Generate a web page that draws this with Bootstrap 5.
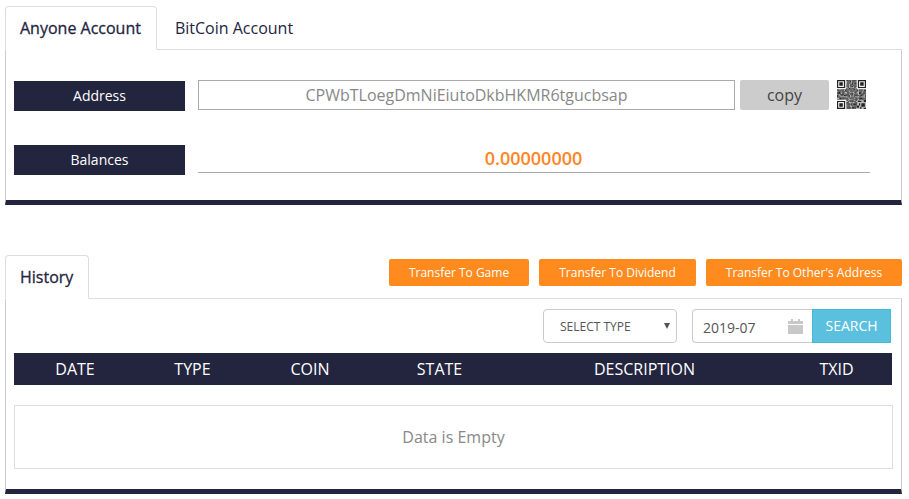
<!DOCTYPE html>
<html lang="en">
<head>
<meta charset="utf-8">
<title>Account</title>
<link rel="stylesheet" href="https://cdn.jsdelivr.net/npm/bootstrap@5.3.0/dist/css/bootstrap.min.css">
<style>
body{font-family:"Open Sans",sans-serif;color:#23253f;background:#fff;margin:0}
.page-wrap{padding:6px 7px 0 5px;width:909px}
.tab-bar{border-bottom:1px solid #ddd;height:44px;--bs-nav-tabs-border-color:#ddd}
.tab-bar .nav-link{font-size:16px;line-height:22px;padding:10px 15px 11px 14px;color:#23253f;height:44px;border-radius:4px 4px 0 0;white-space:nowrap}
.tab-bar .nav-link.active{font-weight:500;-webkit-text-stroke:.3px #23253f;color:#23253f;border-color:#ddd #ddd #fff}
.tab-bar .nav-link:not(.active){padding-left:17px;padding-right:17px}
.panel-box{border-left:1px solid #ccc;border-right:1px solid #ccc;border-bottom:5px solid #23253f}
.panel-top{height:155px;padding:30px 8px 0}
.panel-hist{height:195px;padding:10px 8px 0}
.label-tag{width:171px;height:30px;background:#23253f;color:#fff;font-size:14px;line-height:30px;text-align:center;flex:none}
.label-low{margin-top:1px}
.addr-row{height:30px}
.addr-field{width:537px;height:30px;margin-left:13px;border:1px solid #aaa;border-radius:0;font-size:16px;line-height:28px;color:#888;text-align:center;padding:0;flex:none;background:#fff}
.copy-btn{width:89px;height:30px;margin-left:5px;background:#ccc;border:0;border-radius:2px;font-size:16px;line-height:30px;padding:0;color:#444;flex:none}
.qr-code{display:block;margin-left:8px;flex:none;filter:blur(.35px)}
.bal-row{height:30px;margin-top:35px}
.bal-value{width:672px;height:28px;margin-left:13px;border-bottom:1px solid #aaa;color:#ff8526;font-size:18px;font-weight:600;line-height:27px;text-align:center;flex:none;margin-bottom:2px;padding-right:1px}
.gap-band{height:50px}
.act-row{gap:10px;padding-top:4px}
.act-btn{height:27px;background:#ff8a1e;border:0;border-radius:2px;color:#fff;font-size:12px;line-height:27px;padding:0;text-align:center;flex:none}
.act-a{width:140px}.act-b{width:157px}.act-c{width:196px}
.type-select{width:134px;height:34px;flex:none;border:1px solid #ccc;border-radius:4px;font-size:12px;color:#555;padding:2px 16px 0;line-height:30px;font-family:inherit;box-shadow:none;background-image:url("data:image/svg+xml,%3Csvg xmlns='http://www.w3.org/2000/svg' viewBox='0 0 6 6'%3E%3Cpath fill='%23555' d='M0 0h6L3 6z'/%3E%3C/svg%3E");background-position:right 6px center;background-size:6px 6px}
.date-wrap{width:120px;height:34px;margin-left:15px;border:1px solid #ccc;border-right:0;border-radius:4px 0 0 4px;flex:none}
.date-input{width:94px;height:32px;border:0;outline:0;padding:2px 0 0 10px;font-size:14px;color:#555;background:transparent;font-family:inherit}
.search-btn{width:79px;height:34px;background:#5bc0de;border:1px solid #46b8da;border-radius:0;color:#fff;font-size:14px;line-height:30px;padding:0;flex:none}
.filter-row{height:34px;padding-right:2px}
.hist-table{width:878px;margin:10px 0 0;table-layout:fixed;border-collapse:collapse}
.hist-table th{background:#23253f;color:#fff;font-size:16px;font-weight:400;height:32px;padding:0;text-align:center;border:0;line-height:32px}
.empty-box{width:879px;height:64px;margin-top:20px;border:1px solid #ddd;color:#888;font-size:16px;line-height:62px;text-align:center}
</style>
</head>
<body>
<div class="page-wrap">
  <ul class="nav nav-tabs tab-bar">
    <li class="nav-item"><a class="nav-link active" href="#">Anyone Account</a></li>
    <li class="nav-item"><a class="nav-link" href="#">BitCoin Account</a></li>
  </ul>
  <div class="panel-box panel-top">
    <div class="d-flex align-items-start addr-row">
      <div class="label-tag label-low">Address</div>
      <div class="addr-field">CPWbTLoegDmNiEiutoDkbHKMR6tgucbsap</div>
      <button type="button" class="btn copy-btn">copy</button>
      <svg class="qr-code" width="29" height="29" viewBox="0 0 25 25" aria-label="QR code">
        <defs>
          <path id="qrData" d="M8 0h2v1H8zM11 0h1v2h-1zM13 0h3v1h-3zM9 2h2v1H9zM13 2h1v2h-1zM15 2h2v2h-2zM8 4h2v2H8zM11 4h1v1h-1zM12 5h2v1h-2zM15 5h1v2h-1zM8 7h1v1H8zM10 7h3v1h-3zM0 8h2v1H0zM3 8h3v1H3zM7 8h2v2H7zM11 9h2v1h-2zM14 8h2v1h-2zM17 8h1v2h-1zM19 8h3v1h-3zM23 8h2v2h-2zM1 10h2v2H1zM4 10h2v1H4zM9 10h1v2H9zM12 11h2v2h-2zM15 10h2v1h-2zM19 10h2v2h-2zM22 11h1v2h-1zM0 13h1v2H0zM3 12h3v1H3zM6 13h2v1H6zM10 13h1v2h-1zM15 12h3v2h-3zM20 13h2v1h-2zM24 12h1v3h-1zM2 15h2v2H2zM5 15h3v1H5zM8 16h2v1H8zM12 15h3v1h-3zM16 15h1v3h-1zM19 15h3v2h-3zM6 17h1v1H6zM11 17h3v2h-3zM15 18h1v1h-1zM18 18h3v1h-3zM23 17h2v2h-2zM8 19h2v2H8zM12 20h1v2h-1zM14 20h3v2h-3zM19 20h1v2h-1zM21 20h3v3h-3zM9 22h2v3H9zM13 23h3v2h-3zM17 22h2v2h-2zM20 23h1v2h-1zM23 24h2v1h-2z"/>
        </defs>
        <rect width="25" height="25" fill="#bbb"/>
        <use href="#qrData" fill="#222"/>
        <use href="#qrData" fill="#555" transform="translate(25.4 0) scale(-1 1)"/>
        <use href="#qrData" fill="#666" transform="translate(0 25.4) scale(1 -1)"/>
        <path fill="#eee" d="M0 0h8v8H0zM17 0h8v8h-8zM0 17h8v8H0z"/>
        <path fill="#222" fill-rule="evenodd" d="M0 0h7v7H0zM1 1v5h5V1zM2 2h3v3H2zM18 0h7v7h-7zM19 1v5h5V1zM20 2h3v3h-3zM0 18h7v7H0zM1 19v5h5v-5zM2 20h3v3H2z"/>
      </svg>
    </div>
    <div class="d-flex align-items-end bal-row">
      <div class="label-tag">Balances</div>
      <div class="bal-value">0.00000000</div>
    </div>
  </div>
  <div class="gap-band"></div>
  <ul class="nav nav-tabs tab-bar">
    <li class="nav-item"><a class="nav-link active" href="#">History</a></li>
    <li class="nav-item ms-auto d-flex align-items-start act-row">
      <button type="button" class="btn act-btn act-a">Transfer To Game</button>
      <button type="button" class="btn act-btn act-b">Transfer To Dividend</button>
      <button type="button" class="btn act-btn act-c">Transfer To Other's Address</button>
    </li>
  </ul>
  <div class="panel-box panel-hist">
    <div class="d-flex justify-content-end filter-row">
      <select class="form-select type-select" aria-label="Type"><option>SELECT TYPE</option></select>
      <div class="d-flex align-items-center date-wrap">
        <input class="date-input" type="text" value="2019-07" aria-label="Month">
        <svg width="17" height="17" viewBox="0 0 17 17" aria-hidden="true"><path fill="#c8c8c8" d="M1 3h3V1h2v2h5V1h2v2h3v3H1zM1 7h15v9H1z"/></svg>
      </div>
      <button type="button" class="btn search-btn">SEARCH</button>
    </div>
    <table class="hist-table">
      <colgroup><col width="122"><col width="113"><col width="122"><col width="137"><col width="273"><col width="111"></colgroup>
      <thead><tr><th>DATE</th><th>TYPE</th><th>COIN</th><th>STATE</th><th>DESCRIPTION</th><th>TXID</th></tr></thead>
    </table>
    <div class="empty-box">Data is Empty</div>
  </div>
</div>
</body>
</html>
